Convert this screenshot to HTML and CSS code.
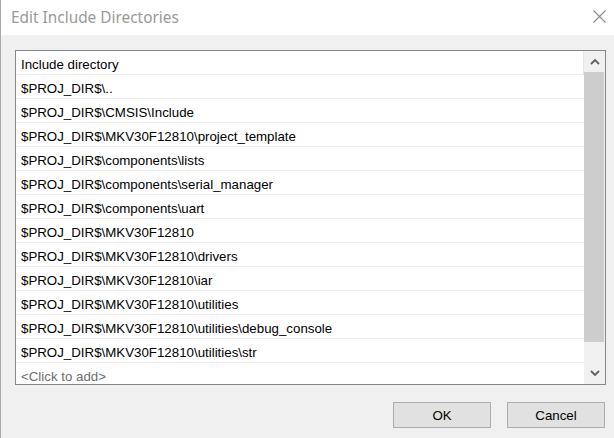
FILE: index.html
```html
<!DOCTYPE html>
<html>
<head>
<meta charset="utf-8">
<link rel="stylesheet" href="styles.css">
</head>
<body>
<div class="dialog">
  <div class="titlebar">
    <span class="title">Edit Include Directories</span>
    <svg class="close" width="13" height="13" viewBox="0 0 13 13"><path d="M0.5 0.5 L12.5 12.5 M12.5 0.5 L0.5 12.5" stroke="#8a8a8a" stroke-width="1.1" fill="none"/></svg>
  </div>
  <div class="content">
    <div class="listbox">
      <div class="rows">
        <div class="row header">Include directory</div>
        <div class="row">$PROJ_DIR$\..</div>
        <div class="row">$PROJ_DIR$\CMSIS\Include</div>
        <div class="row">$PROJ_DIR$\MKV30F12810\project_template</div>
        <div class="row">$PROJ_DIR$\components\lists</div>
        <div class="row">$PROJ_DIR$\components\serial_manager</div>
        <div class="row">$PROJ_DIR$\components\uart</div>
        <div class="row">$PROJ_DIR$\MKV30F12810</div>
        <div class="row">$PROJ_DIR$\MKV30F12810\drivers</div>
        <div class="row">$PROJ_DIR$\MKV30F12810\iar</div>
        <div class="row">$PROJ_DIR$\MKV30F12810\utilities</div>
        <div class="row">$PROJ_DIR$\MKV30F12810\utilities\debug_console</div>
        <div class="row">$PROJ_DIR$\MKV30F12810\utilities\str</div>
        <div class="row placeholder">&lt;Click to add&gt;</div>
      </div>
      <div class="scrollbar">
        <div class="sb-btn"><svg width="10" height="7" viewBox="0 0 10 7"><path d="M1 6 L5 2 L9 6" stroke="#606060" stroke-width="1.8" fill="none"/></svg></div>
        <div class="sb-track"><div class="sb-thumb"></div></div>
        <div class="sb-btn"><svg width="10" height="7" viewBox="0 0 10 7"><path d="M1 1 L5 5 L9 1" stroke="#606060" stroke-width="1.8" fill="none"/></svg></div>
      </div>
    </div>
    <div class="buttons">
      <button class="btn">OK</button>
      <button class="btn">Cancel</button>
    </div>
  </div>
</div>
</body>
</html>
```

FILE: styles.css
```css
html, body {
  margin: 0;
  padding: 0;
}
body {
  background: #f0f0f0;
  font-family: "Liberation Sans", Arial, sans-serif;
}
.dialog {
  height: 438px;
  box-sizing: border-box;
  border-left: 1px solid #a9a9a9;
  display: flex;
  flex-direction: column;
}
.titlebar {
  height: 35px;
  flex: none;
  background: #fff;
  display: flex;
  align-items: center;
  justify-content: space-between;
  padding: 0 8px 0 10px;
  box-sizing: border-box;
}
.title {
  font-family: "Noto Sans", sans-serif;
  font-size: 15.4px;
  color: #999999;
}
.close {
  display: block;
  margin-bottom: 2px;
}
.content {
  display: flex;
  flex-direction: column;
  padding: 15px 8px 0 14px;
}
.listbox {
  height: 335px;
  box-sizing: border-box;
  border: 1px solid #828790;
  background: #fff;
  display: flex;
  overflow: hidden;
}
.rows {
  flex: 1;
  overflow: hidden;
}
.row {
  height: 24px;
  box-sizing: border-box;
  border-bottom: 1px solid #ededed;
  padding: 4px 0 0 5px;
  font-size: 13.3px;
  line-height: 19px;
  color: #000;
  white-space: nowrap;
}
.row.header {
  box-shadow: inset -1px 0 #e6e6e6;
}
.row.placeholder {
  color: #6d6d6d;
}
.scrollbar {
  width: 21px;
  flex: none;
  background: #f0f0f0;
  display: flex;
  flex-direction: column;
}
.sb-btn {
  height: 21px;
  flex: none;
  display: flex;
  align-items: center;
  justify-content: center;
}
.sb-btn svg {
  display: block;
}
.sb-track {
  flex: 1;
}
.sb-thumb {
  height: 270px;
  margin-right: 1px;
  background: #cdcdcd;
}
.buttons {
  display: flex;
  justify-content: flex-end;
  gap: 16px;
  margin-top: 17px;
  padding-right: 1px;
}
.btn {
  width: 98px;
  height: 26px;
  box-sizing: border-box;
  background: #e1e1e1;
  border: 1px solid #adadad;
  font-family: "Liberation Sans", Arial, sans-serif;
  font-size: 13.3px;
  color: #000;
  padding: 0;
}
```
